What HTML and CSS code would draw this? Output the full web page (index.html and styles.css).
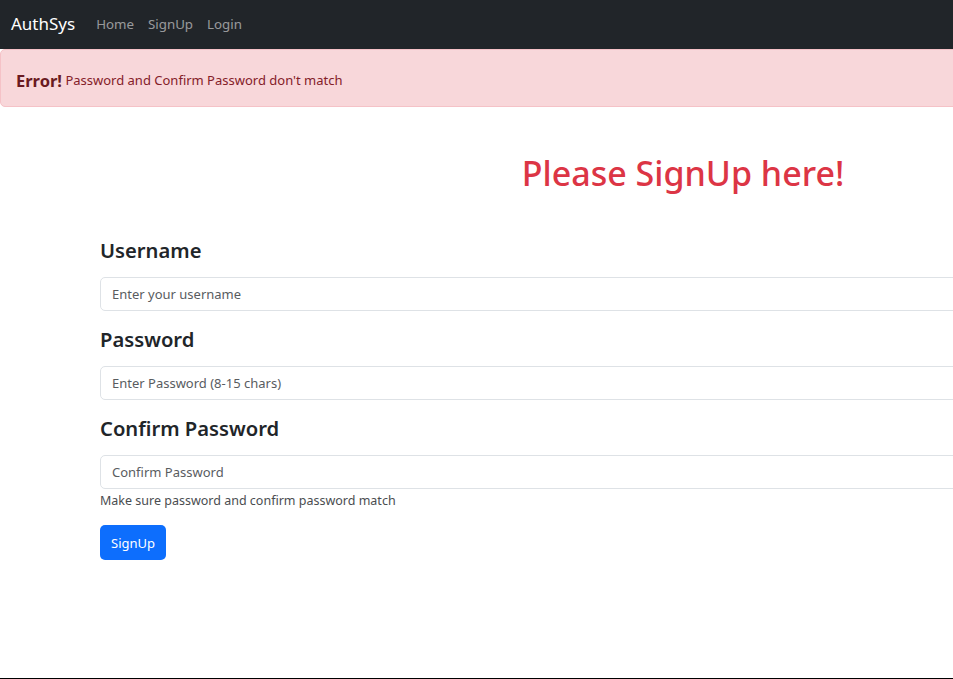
FILE: index.html
```html
<!DOCTYPE html>
<html lang="en">
<head>
<meta charset="utf-8">
<title>AuthSys - SignUp</title>
<link rel="stylesheet" href="styles.css">
</head>
<body>
<div class="page">
  <nav class="navbar">
    <a class="brand" href="#">AuthSys</a>
    <ul class="nav-links">
      <li><a href="#">Home</a></li>
      <li><a href="#">SignUp</a></li>
      <li><a href="#">Login</a></li>
    </ul>
  </nav>
  <div class="alert"><strong>Error!</strong> Password and Confirm Password don't match</div>
  <main class="container">
    <h1 class="title">Please SignUp here!</h1>
    <form class="form">
      <div class="group">
        <label class="label" for="u">Username</label>
        <input class="control" id="u" type="text" placeholder="Enter your username">
      </div>
      <div class="group">
        <label class="label" for="p">Password</label>
        <input class="control" id="p" type="password" placeholder="Enter Password (8-15 chars)">
      </div>
      <div class="group">
        <label class="label" for="c">Confirm Password</label>
        <input class="control" id="c" type="password" placeholder="Confirm Password">
        <div class="help">Make sure password and confirm password match</div>
      </div>
      <button class="btn" type="submit">SignUp</button>
    </form>
  </main>
</div>
</body>
</html>
```
FILE: styles.css
```css
* { box-sizing: border-box; }
html, body { margin: 0; padding: 0; overflow: hidden; }
body {
  font-family: "Noto Sans", "Open Sans", sans-serif;
  color: #212529;
  background: #fff;
}
.page {
  height: 679px;
  border-bottom: 1px solid #000;
  overflow: hidden;
}
.navbar {
  height: 49px;
  background: #212529;
  display: flex;
  align-items: center;
  padding-left: 11px;
  padding-bottom: 3px;
}
.brand {
  color: #fff;
  text-decoration: none;
  font-size: 17px;
  margin-right: 21px;
}
.nav-links {
  list-style: none;
  margin: 0;
  padding: 0;
  display: flex;
  gap: 14px;
}
.nav-links a {
  color: rgba(255,255,255,.55);
  text-decoration: none;
  font-size: 13.3px;
}
.alert {
  width: 1200px;
  height: 58px;
  background: #f8d7da;
  border: 1px solid #f5c2c7;
  border-radius: 5px;
  color: #842029;
  font-size: 13px;
  display: flex;
  align-items: center;
  padding-left: 15px;
  padding-top: 4px;
  white-space: pre;
}
.alert strong {
  font-size: 16.5px;
  font-weight: 700;
  color: #6a1a21;
}
.container {
  margin-left: 100px;
  width: 1166px;
}
.title {
  margin: 46px 0 0;
  text-align: center;
  color: #dc3545;
  font-size: 34px;
  font-weight: 500;
  line-height: 40px;
}
.form {
  margin-top: 43px;
  display: flex;
  flex-direction: column;
}
.group {
  display: flex;
  flex-direction: column;
  margin-bottom: 14px;
}
.label {
  font-size: 20.2px;
  font-weight: 600;
  line-height: 28px;
  margin-bottom: 13px;
}
.control {
  height: 34px;
  border: 1px solid #dee2e6;
  border-radius: 5px;
  padding: 0 11px;
  font-family: inherit;
  font-size: 13px;
  color: #212529;
}
.control::placeholder { color: #595c5f; }
.help {
  font-size: 12.5px;
  color: #4a4d50;
  margin-top: 3px;
}
.btn {
  align-self: flex-start;
  margin-top: 2px;
  height: 35px;
  padding: 0 11px;
  background: #0d6efd;
  color: #fff;
  border: 0;
  border-radius: 5px;
  font-family: inherit;
  font-size: 13px;
}
```
